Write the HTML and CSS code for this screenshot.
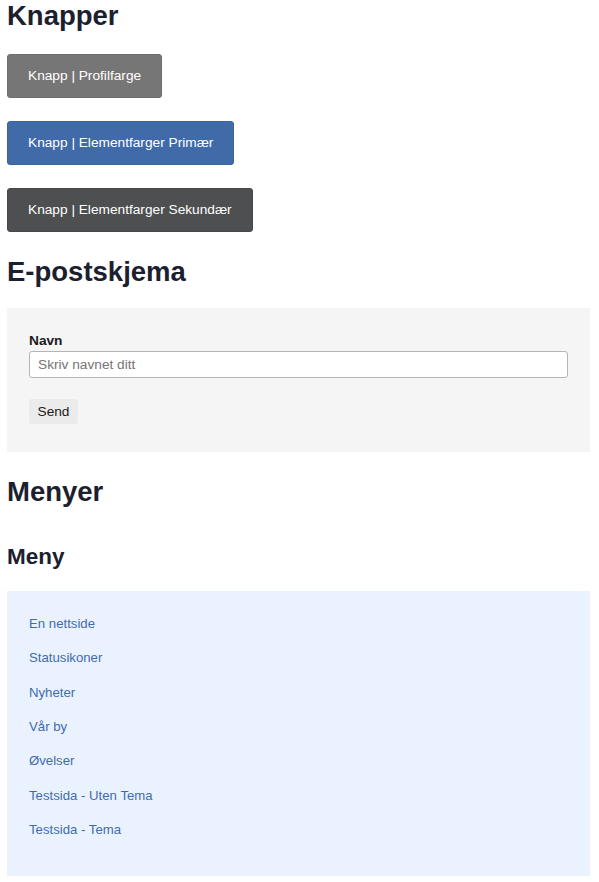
FILE: index.html
```html
<!DOCTYPE html>
<html lang="no">
<head>
<meta charset="utf-8">
<title>Komponenter</title>
<link rel="stylesheet" href="styles.css">
</head>
<body>
<main class="page">
  <h1 class="h1 h1-first">Knapper</h1>
  <div class="buttons">
    <button class="btn btn-profile" type="button">Knapp | Profilfarge</button>
    <button class="btn btn-primary" type="button">Knapp | Elementfarger Primær</button>
    <button class="btn btn-secondary" type="button">Knapp | Elementfarger Sekundær</button>
  </div>

  <h1 class="h1 h1-section">E-postskjema</h1>
  <form class="form-panel">
    <label class="label" for="navn">Navn</label>
    <input class="input" id="navn" type="text" placeholder="Skriv navnet ditt">
    <button class="send" type="button">Send</button>
  </form>

  <h1 class="h1 h1-section">Menyer</h1>
  <h2 class="h2">Meny</h2>
  <nav class="menu">
    <ul class="menu-list">
      <li class="menu-item"><a href="#" class="menu-link">En nettside</a></li>
      <li class="menu-item"><a href="#" class="menu-link">Statusikoner</a></li>
      <li class="menu-item"><a href="#" class="menu-link">Nyheter</a></li>
      <li class="menu-item"><a href="#" class="menu-link">Vår by</a></li>
      <li class="menu-item"><a href="#" class="menu-link">Øvelser</a></li>
      <li class="menu-item"><a href="#" class="menu-link">Testsida - Uten Tema</a></li>
      <li class="menu-item"><a href="#" class="menu-link">Testsida - Tema</a></li>
    </ul>
  </nav>
</main>
</body>
</html>
```
FILE: styles.css
```css
* { box-sizing: border-box; }

html, body {
  margin: 0;
  padding: 0;
  background: #ffffff;
}

body {
  font-family: "Liberation Sans", Arial, Helvetica, sans-serif;
  color: #1d2130;
}

.page {
  display: flex;
  flex-direction: column;
  align-items: flex-start;
  padding: 0 9px 0 7px;
}

.h1 {
  margin: 0;
  font-size: 27.5px;
  line-height: 1.15;
  font-weight: 700;
  color: #1c202e;
}

.h1-section { margin-top: 24px; }

.h2 {
  margin: 36px 0 0;
  font-size: 22.5px;
  line-height: 1.15;
  font-weight: 700;
  color: #1c202e;
}

.buttons {
  display: flex;
  flex-direction: column;
  align-items: flex-start;
  gap: 23px;
  margin-top: 22px;
}

.btn {
  height: 44px;
  padding: 0 20px;
  border: 1px solid transparent;
  border-radius: 3px;
  font-family: inherit;
  font-size: 13.7px;
  color: #ffffff;
  cursor: pointer;
}

.btn-profile { background: #767676; border-color: #6e6e6e; }
.btn-primary { background: #406aa8; border-color: #3b64a0; }
.btn-secondary { background: #4e4f51; border-color: #474849; }

.form-panel {
  align-self: stretch;
  margin-top: 21px;
  background: #f5f5f5;
  padding: 25px 22px 28px;
  display: flex;
  flex-direction: column;
  align-items: flex-start;
}

.label {
  font-size: 13.7px;
  line-height: 1.15;
  font-weight: 700;
  color: #1a1a1a;
}

.input {
  align-self: stretch;
  margin-top: 2px;
  height: 27px;
  padding: 0 8px;
  border: 1px solid #b5b5b5;
  border-radius: 3px;
  background: #ffffff;
  font-family: inherit;
  font-size: 13.7px;
  color: #222;
}

.input::placeholder { color: #767676; }

.send {
  margin-top: 21px;
  height: 25px;
  width: 49px;
  padding: 0;
  border: none;
  border-radius: 3px;
  background: #ebebeb;
  font-family: inherit;
  font-size: 13.7px;
  color: #1a1a1a;
}

.menu {
  align-self: stretch;
  margin-top: 21px;
  background: #ebf2ff;
  padding: 16px 22px 29px;
}

.menu-list {
  list-style: none;
  margin: 0;
  padding: 0;
  display: flex;
  flex-direction: column;
}

.menu-item {
  height: 34.3px;
  display: flex;
  align-items: center;
}

.menu-link {
  font-size: 13.2px;
  color: #3f6cad;
  text-decoration: none;
}
```
